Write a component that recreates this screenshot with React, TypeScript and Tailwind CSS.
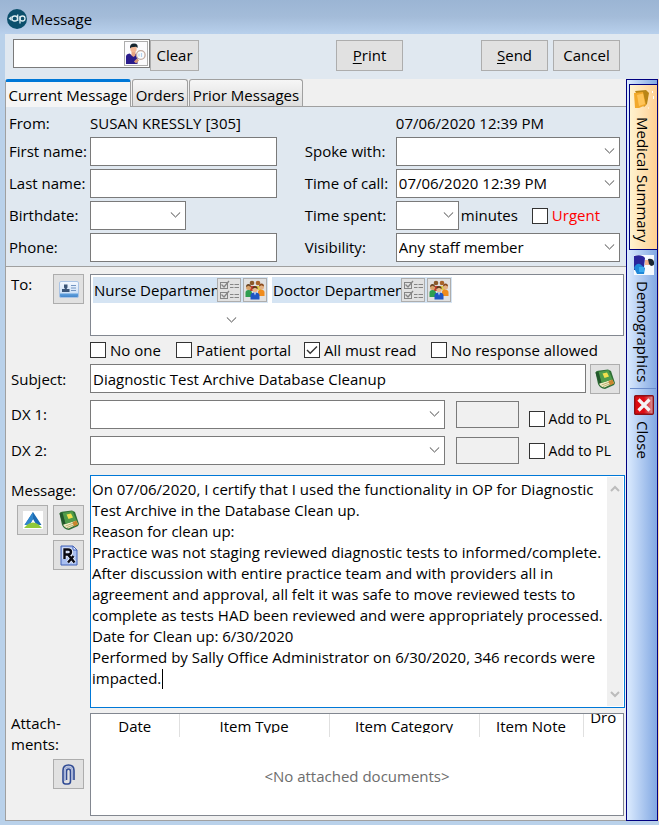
import { useState } from "react";

const messageText = `On 07/06/2020, I certify that I used the functionality in OP for Diagnostic Test Archive in the Database Clean up.
Reason for clean up:
Practice was not staging reviewed diagnostic tests to informed/complete. After discussion with entire practice team and with providers all in agreement and approval, all felt it was safe to move reviewed tests to complete as tests HAD been reviewed and were appropriately processed.
Date for Clean up: 6/30/2020
Performed by Sally Office Administrator on 6/30/2020, 346 records were impacted.`;

/* Icons */

function Chevron({ className = "" }: { className?: string }) {
  return (
    <svg viewBox="0 0 11 6" className={`h-[6px] w-[11px] ${className}`} fill="none" stroke="#4a4a4a" strokeWidth="1">
      <path d="M.8.4 5.500 5 10.200.4" />
    </svg>
  );
}

function LogoIcon() {
  return (
    <svg viewBox="0 0 20 20" className="size-5">
      <circle cx="10" cy="10" r="10" fill="#0b4f6c" />
      <path d="M1.500 9.500 4.500 7v5z" fill="#cfe3ea" />
      <rect x="5" y="7" width="5.500" height="5" rx="2.500" fill="none" stroke="#dcecf1" strokeWidth="1.300" />
      <path d="M10.700 5.500V12" stroke="#dcecf1" strokeWidth="1.300" />
      <rect x="13" y="7" width="5" height="5" rx="2.500" fill="none" stroke="#dcecf1" strokeWidth="1.300" />
      <path d="M13 7v7.500" stroke="#dcecf1" strokeWidth="1.300" />
    </svg>
  );
}

function PatientSearchIcon() {
  return (
    <svg viewBox="0 0 20 22" className="h-[22px] w-5">
      <path d="M0 21v-7.500Q0 11 3.500 10.500L7 13l3-2.500 1.500 2V21z" fill="#2a1c8c" />
      <path d="M5.500 8.500h4v4L7.500 14l-2-1.500z" fill="#e9a583" />
      <circle cx="7.500" cy="6" r="3.200" fill="#f5b795" />
      <path d="M4 5.500Q3.500.5 8 .5T11.500 5L10 3.800 5.500 4.300z" fill="#17262f" />
      <path d="m12 16.500-3 3" stroke="#d99a76" strokeWidth="3" />
      <circle cx="14.800" cy="12" r="4.300" fill="#fbfdff" stroke="#c3aaa0" strokeWidth="1.300" />
      <path d="M13 10.500v3M15.500 10v4" fill="none" stroke="#b8d2ee" strokeWidth="1.200" />
    </svg>
  );
}

function CardIcon() {
  return (
    <svg viewBox="0 0 20 17" className="h-[17px] w-5">
      <defs>
        <linearGradient id="cardFill" x2="0" y2="1">
          <stop offset="0" stopColor="#f4f9ff" />
          <stop offset=".7" stopColor="#cfe2f8" />
          <stop offset=".8" stopColor="#5d9ddb" />
          <stop offset="1" stopColor="#3f83c9" />
        </linearGradient>
      </defs>
      <rect x=".5" y=".5" width="19" height="16" rx="1.500" fill="url(#cardFill)" stroke="#a9c3e4" />
      <path d="M5 3.500h3.500v3L7.500 8h3v3H3V8h3L5 6.500z" fill="#3c5678" />
      <path d="M12 4.500h5M12 7h5M12 9.500h5" stroke="#7496c2" strokeWidth="1.200" />
    </svg>
  );
}

function ChecklistIcon() {
  return (
    <svg viewBox="0 0 20 20" className="size-5" fill="none" stroke="#858585">
      <rect x="1.500" y="2.500" width="7" height="6" />
      <rect x="1.500" y="12.500" width="7" height="6" />
      <path d="m2.500 4.500 2.500 2.500L10 1M2.500 14.500 5 17l5-6" strokeWidth="1.300" />
      <path d="M11 4.500h3.500M15.500 4.500H20M11 7.500h3.500M15.500 7.500H20M11 14.500h3.500M15.500 14.500H20M11 17.500h3.500M15.500 17.500H20" />
    </svg>
  );
}

function GroupIcon() {
  return (
    <svg viewBox="0 0 20 20" className="size-5">
      <circle cx="7" cy="3" r="2.300" fill="#8a5a2b" />
      <circle cx="13" cy="3" r="2.300" fill="#a8642a" />
      <path d="M4.500 6h5v5h-5z" fill="#c23b2e" />
      <path d="M11 6h5v4h-5z" fill="#d9cf4a" />
      <circle cx="3.500" cy="7.500" r="2.500" fill="#d8a26a" />
      <path d="M1 7q0-3 2.500-3T6 7L3.500 5.800z" fill="#6b4423" />
      <path d="M.5 17v-4.500Q.5 10 3.500 10T7 12.500V17z" fill="#2f9e4f" />
      <circle cx="16.500" cy="7" r="2.500" fill="#e3b183" />
      <path d="M14 6.500q0-3 2.500-3T19 6.500l-2.500-1.200z" fill="#8a4b1d" />
      <path d="M13 16v-4q0-2.500 3-2.500t3.500 2.500v4z" fill="#f08c1d" />
      <circle cx="10" cy="9.500" r="2.600" fill="#eab88c" />
      <path d="M7.300 9q0-3 2.700-3t2.700 3L10 7.800z" fill="#5a3517" />
      <path d="M5.500 19.500v-4q0-3 4.500-3t4.500 3v4z" fill="#1f56c4" />
      <path d="m9 12.500 1 3 1-3z" fill="#dfeafb" />
    </svg>
  );
}

function BookIcon() {
  return (
    <svg viewBox="0 0 22 22" className="size-[22px]">
      <path d="M1.500 4.500Q2 3 4 2.800L14 1.500l3 1.500 4 12-1 2-9 4q-5-.5-7-5z" fill="#2f6f36" />
      <path d="M5 15.500 18 11.500l2 3.500-9.500 4.500Q6.500 19 5 15.500z" fill="#f3ecc8" />
      <path d="m7.500 17 11-4M9 18.500l10.500-4" stroke="#a8a25a" strokeWidth=".8" />
      <path d="M4.500 4 14.500 2l4 9.500L7.500 15z" fill="#4f9c4a" />
      <path d="M1.500 4.500 4.500 4l3 11-2.500.5z" fill="#23572c" />
      <path d="m8.500 5.500 4.500-1 2 4-4.500 1.500z" fill="#f2e04e" />
      <path d="m14.500 13 4-1.500 1.500 4-4 2z" fill="#c9862f" />
    </svg>
  );
}

function TriangleIcon() {
  return (
    <svg viewBox="0 0 20 18" className="h-[18px] w-5">
      <path fill="#fff" d="M0 0h20v18H0z" />
      <path d="M10 1 18.500 14h-5L10 8l-3.500 6h-5z" fill="#1c6cb4" />
      <path d="M10 1v7l-3.500 6h-5z" fill="#2f86cc" />
      <path d="M4.500 13.500Q10 9.500 15.500 13.500l3.500 3.500H1z" fill="#8fc93a" />
    </svg>
  );
}

function RxIcon() {
  return (
    <svg viewBox="0 0 18 21" className="h-[21px] w-[18px]">
      <path d="M1 1h12l4 4v15H1z" fill="#a9bff0" stroke="#4262b8" />
      <path d="M13 1v4h4z" fill="#eef3ff" stroke="#4262b8" />
      <path d="M4.500 14V4.500h3.500q3 0 3 2.500t-3 2.500H4.500m3.500 0 6.500 8M13.500 11 8 17.500" fill="none" stroke="#eef3ff" strokeWidth="4.200" />
      <path d="M4.500 14V4.500h3.500q3 0 3 2.500t-3 2.500H4.500m3.500 0 6.500 8M13.500 11 8 17.500" fill="none" stroke="#0a0a14" strokeWidth="2.400" />
    </svg>
  );
}

function PaperclipIcon() {
  return (
    <svg viewBox="0 0 13 21" className="h-[21px] w-[13px]" fill="none">
      <path d="M12 16V6.500Q12 1 6.500 1T1 6.500V17q0 3 2.500 3h2.500q2.500 0 2.500-3V7.500Q8.500 5 6.500 5t-2 2.500V16" stroke="#2f4a94" strokeWidth="1.600" />
      <path d="M10.200 16V7q0-4-3.700-4T2.800 7v10" stroke="#a3b1da" strokeWidth="1.500" />
    </svg>
  );
}

function FolderIcon() {
  return (
    <svg viewBox="0 0 20 20" className="size-5">
      <path d="M1 2 12 1l3 3-2 11-3 3z" fill="#b98516" />
      <path d="M0 4 9 3l3 13-7 3H1z" fill="#f2a92c" />
      <path d="m3 6 6-1.500L11 15l-6 2z" fill="#ffc458" />
      <path d="M18.500 2v2M19.500 7v3M14 19h1" stroke="#fff" />
    </svg>
  );
}

function PersonIcon() {
  return (
    <svg viewBox="0 0 20 20" className="size-5">
      <path fill="#f7fbff" d="M0 0h20v20H0z" />
      <path d="M0 1q8-2 11 2l-1 9-4 3H0z" fill="#2a249b" />
      <path d="M11 5h5v5h-5z" fill="#f4b592" />
      <path d="M14 4q5-1 6 3t-3 4l-2-2z" fill="#1b2631" />
      <path d="M0 13q2-5 6-4l5 4-1 6H3z" fill="#1e87d8" />
      <path d="M5 12h5v5H5z" fill="#38a9ee" />
    </svg>
  );
}

function CloseIcon() {
  return (
    <svg viewBox="0 0 20 20" className="size-5">
      <defs>
        <linearGradient id="closeFill">
          <stop offset=".5" stopColor="#dd0b12" />
          <stop offset="1" stopColor="#d79a9e" />
        </linearGradient>
      </defs>
      <rect x=".7" y=".7" width="18.600" height="18.600" rx="1" fill="url(#closeFill)" stroke="#8c1016" strokeWidth="1.400" />
      <path d="m4.500 4.500 11 11M15.500 4.500l-11 11" stroke="#f4f4f4" strokeWidth="3.200" />
    </svg>
  );
}

/* Controls */

interface ComboProps {
  id: string;
  value?: string;
  className?: string;
}

function Combo({ id, value = "", className = "" }: ComboProps) {
  return (
    <div className={`relative ${className}`}>
      <select
        id={id}
        defaultValue={value}
        className="block h-[29px] w-full appearance-none border border-[#7a7a7a] bg-white pl-[2px] pr-6 outline-none"
      >
        <option value={value}>{value}</option>
      </select>
      <Chevron className="pointer-events-none absolute right-[5px] top-[11px]" />
    </div>
  );
}

interface CheckProps {
  label: string;
  checked?: boolean;
  className?: string;
}

function Check({ label, checked = false, className = "" }: CheckProps) {
  const [on, setOn] = useState(checked);

  return (
    <label className={`flex items-center gap-1 whitespace-nowrap ${className}`}>
      <span className="relative block size-4 shrink-0">
        <input
          type="checkbox"
          checked={on}
          onChange={(e) => setOn(e.target.checked)}
          className="block size-4 appearance-none border border-[#333] bg-white"
        />
        {on && (
          <svg viewBox="0 0 16 16" className="pointer-events-none absolute inset-0" fill="none" stroke="#333" strokeWidth="1.4">
            <path d="m3 8 3.200 3.300L13 4.500" />
          </svg>
        )}
      </span>
      {label}
    </label>
  );
}

interface IconButtonProps {
  label: string;
  className?: string;
  children: React.ReactNode;
}

function IconButton({ label, className = "h-[30px] w-[31px] bg-[#e1e1e1]", children }: IconButtonProps) {
  return (
    <button
      type="button"
      aria-label={label}
      className={`flex shrink-0 items-center justify-center border border-[#adadad] ${className}`}
    >
      {children}
    </button>
  );
}

function Chip({ name, className }: { name: string; className: string }) {
  return (
    <div className={`flex h-[26px] items-center bg-[#d5e4f3] pr-px ${className}`}>
      <span className="min-w-0 flex-1 overflow-hidden whitespace-nowrap pl-px">{name}</span>
      <IconButton label="Tasks" className="size-6 bg-[#e1e1e1]">
        <ChecklistIcon />
      </IconButton>
      <IconButton label="Members" className="ml-[2px] size-6 bg-[#e1e1e1]">
        <GroupIcon />
      </IconButton>
    </div>
  );
}

const textBox = "block h-[29px] w-full min-w-0 border border-[#7a7a7a] bg-white px-[2px] outline-none";
const pushButton = "h-[31px] border border-[#adadad] bg-[#e1e1e1]";
const lowerRow = "grid grid-cols-[79px_1fr]";

export default function App() {
  const [subject, setSubject] = useState("Diagnostic Test Archive Database Cleanup");
  const [message, setMessage] = useState(messageText);

  return (
    <div className="bg-[#b9d1ea] font-['Open_Sans','Noto_Sans',sans-serif] text-[15px] leading-[21px] text-black">
      {/* Title bar */}
      <header className="flex h-[34px] items-center gap-1 bg-linear-to-b from-[#9bb5d4] via-[#a4bcd9] to-[#b8d0ec] pl-[7px] pt-1">
        <LogoIcon />
        <h1>Message</h1>
      </header>

      <div className="pb-1 pl-[5px]">
        {/* Toolbar */}
        <div className="flex h-[45px] bg-[#e0e8f0] pl-2 pr-[39px] pt-[5px]">
          <div className="flex h-[29px] w-[137px] items-center border border-[#7a7a7a] bg-white pr-px">
            <input type="text" aria-label="Patient search" className="h-full min-w-0 flex-1 px-1 outline-none" />
            <IconButton label="Find patient" className="h-[25px] w-6 bg-[#fbfbfd]">
              <PatientSearchIcon />
            </IconButton>
          </div>
          <button type="button" className={`mt-px w-[49px] ${pushButton}`}>
            Clear
          </button>
          <div className="flex-[137]" />
          <button type="button" className={`mt-px w-[67px] ${pushButton}`}>
            <span className="underline underline-offset-2">P</span>rint
          </button>
          <div className="flex-[78]" />
          <button type="button" className={`mt-px w-[67px] ${pushButton}`}>
            <span className="underline underline-offset-2">S</span>end
          </button>
          <button type="button" className={`ml-[5px] mt-px w-[67px] ${pushButton}`}>
            Cancel
          </button>
        </div>

        <div className="flex bg-[#f0f0f0]">
          <main className="min-w-0 flex-1">
            {/* Tabs */}
            <div role="tablist" className="flex h-7 items-stretch bg-[#f0f0f0]">
              <button
                type="button"
                role="tab"
                aria-selected="true"
                className="w-[126px] whitespace-nowrap rounded-t-[3px] border-x border-t-[3px] border-x-[#a0a0a0] border-t-[#0078d7] bg-[#f5f5f5] pt-[2px]"
              >
                Current Message
              </button>
              <div className="flex flex-1 gap-px border-b border-[#a0a0a0] pl-px">
                <button
                  type="button"
                  role="tab"
                  className="w-14 whitespace-nowrap rounded-t-[3px] border border-b-0 border-[#a0a0a0] bg-linear-to-b from-[#f6f6f6] to-[#dedede] pt-[5px]"
                >
                  Orders
                </button>
                <button
                  type="button"
                  role="tab"
                  className="w-[114px] whitespace-nowrap rounded-t-[3px] border border-b-0 border-[#a0a0a0] bg-linear-to-b from-[#f6f6f6] to-[#dedede] pt-[5px]"
                >
                  Prior Messages
                </button>
              </div>
            </div>

            {/* Caller details */}
            <section className="grid grid-cols-[81px_5fr_28px_91px_6fr] items-center gap-y-[3px] border-l border-[#a0a0a0] bg-[#e0e8f0] pb-1 pl-[3px] pr-[6px] pt-[6px]">
              <span className="whitespace-nowrap">From:</span>
              <span className="col-span-3 whitespace-nowrap">SUSAN KRESSLY [305]</span>
              <span className="whitespace-nowrap">07/06/2020 12:39 PM</span>

              <label htmlFor="firstName" className="whitespace-nowrap">First name:</label>
              <input id="firstName" type="text" className={textBox} />
              <span />
              <label htmlFor="spokeWith" className="whitespace-nowrap">Spoke with:</label>
              <Combo id="spokeWith" />

              <label htmlFor="lastName" className="whitespace-nowrap">Last name:</label>
              <input id="lastName" type="text" className={textBox} />
              <span />
              <label htmlFor="timeOfCall" className="whitespace-nowrap">Time of call:</label>
              <Combo id="timeOfCall" value="07/06/2020 12:39 PM" />

              <label htmlFor="birthdate" className="whitespace-nowrap">Birthdate:</label>
              <Combo id="birthdate" className="w-24" />
              <span />
              <label htmlFor="timeSpent" className="whitespace-nowrap">Time spent:</label>
              <div className="flex items-center">
                <Combo id="timeSpent" className="w-[63px]" />
                <span className="ml-[2px]">minutes</span>
                <Check label="Urgent" className="ml-auto mr-5 text-[#ff0000]" />
              </div>

              <label htmlFor="phone" className="whitespace-nowrap">Phone:</label>
              <input id="phone" type="text" className={textBox} />
              <span />
              <label htmlFor="visibility" className="whitespace-nowrap">Visibility:</label>
              <Combo id="visibility" value="Any staff member" />
            </section>

            {/* Message details */}
            <section className="border border-r-0 border-[#a0a0a0] bg-[#f0f0f0] pb-1 pl-[5px] pr-px pt-[7px]">
              <div className={lowerRow}>
                <div className="flex items-start justify-between pr-[6px]">
                  <span>To:</span>
                  <IconButton label="Choose recipients">
                    <CardIcon />
                  </IconButton>
                </div>
                <div className="mr-px flex h-[62px] flex-col justify-between border border-[#828790] bg-white px-[2px] pb-3 pt-[2px]">
                  <div className="flex gap-1">
                    <Chip name="Nurse Departmen" className="w-[175px]" />
                    <Chip name="Doctor Departmen" className="w-[180px]" />
                  </div>
                  <button type="button" aria-label="More recipients" className="ml-[133px] w-3">
                    <Chevron />
                  </button>
                </div>
              </div>

              <div className="ml-[79px] flex h-7 items-center">
                <Check label="No one" className="w-[86px]" />
                <Check label="Patient portal" className="w-32" />
                <Check label="All must read" checked className="w-[127px]" />
                <Check label="No response allowed" />
              </div>

              <div className={lowerRow}>
                <label htmlFor="subject" className="self-center">Subject:</label>
                <div className="flex gap-1 pr-[5px]">
                  <input
                    id="subject"
                    type="text"
                    value={subject}
                    onChange={(e) => setSubject(e.target.value)}
                    className={textBox}
                  />
                  <IconButton label="Subject phrases" className="size-[30px] bg-[#e1e1e1]">
                    <BookIcon />
                  </IconButton>
                </div>
              </div>

              <div className="mt-[6px] flex flex-col gap-[7px]">
                <div className={lowerRow}>
                  <label htmlFor="dx1" className="self-center">DX 1:</label>
                  <div className="flex items-center pr-[14px]">
                    <Combo id="dx1" className="min-w-0 flex-1" />
                    <input type="text" disabled aria-label="DX 1 code" className="ml-[11px] h-[27px] w-[63px] border border-[#7a7a7a]" />
                    <Check label="Add to PL" className="ml-[10px] mt-2 text-sm" />
                  </div>
                </div>
                <div className={lowerRow}>
                  <label htmlFor="dx2" className="self-center">DX 2:</label>
                  <div className="flex items-center pr-[14px]">
                    <Combo id="dx2" className="min-w-0 flex-1" />
                    <input type="text" disabled aria-label="DX 2 code" className="ml-[11px] h-[27px] w-[63px] border border-[#7a7a7a]" />
                    <Check label="Add to PL" className="ml-[10px] text-sm" />
                  </div>
                </div>
              </div>

              <div className={`mt-[10px] ${lowerRow}`}>
                <div className="pr-[6px] pt-[5px]">
                  <label htmlFor="message">Message:</label>
                  <div className="mt-1 flex justify-end gap-[5px]">
                    <IconButton label="Patient education">
                      <TriangleIcon />
                    </IconButton>
                    <IconButton label="Message phrases">
                      <BookIcon />
                    </IconButton>
                  </div>
                  <div className="mt-[5px] flex justify-end">
                    <IconButton label="Prescriptions">
                      <RxIcon />
                    </IconButton>
                  </div>
                </div>
                <div className="relative flex border border-[#0078d7] bg-white pr-px">
                  <textarea
                    id="message"
                    value={message}
                    onChange={(e) => setMessage(e.target.value)}
                    className="block h-[231px] min-w-0 flex-1 resize-none overflow-hidden pl-px pt-[3px] outline-none"
                  />
                  {/* text cursor */}
                  <span className="absolute left-[71px] top-[193px] h-5 w-px bg-black" />
                  <div className="my-px flex w-4 flex-col items-center justify-between bg-[#f0f0f0] py-2">
                    <button type="button" aria-label="Scroll up">
                      <svg viewBox="0 0 10 7" className="h-[7px] w-[10px]" fill="none" stroke="#bcbcbc" strokeWidth="2">
                        <path d="m1 6 4-4 4 4" />
                      </svg>
                    </button>
                    <button type="button" aria-label="Scroll down">
                      <svg viewBox="0 0 10 7" className="h-[7px] w-[10px]" fill="none" stroke="#bcbcbc" strokeWidth="2">
                        <path d="m1 1 4 4 4-4" />
                      </svg>
                    </button>
                  </div>
                </div>
              </div>

              <div className={`mt-[5px] ${lowerRow}`}>
                <div className="pr-[6px]">
                  <p>
                    Attach-
                    <br />
                    ments:
                  </p>
                  <div className="mt-1 flex justify-end">
                    <IconButton label="Attach document">
                      <PaperclipIcon />
                    </IconButton>
                  </div>
                </div>
                <div className="mr-px h-[103px] border border-[#828790] bg-white">
                  <table className="w-full table-fixed border-collapse">
                    <colgroup>
                      <col className="w-[88px]" />
                      <col />
                      <col />
                      <col className="w-[104px]" />
                      <col className="w-10" />
                    </colgroup>
                    <thead>
                      <tr className="h-[23px] align-top">
                        {["Date", "Item Type", "Item Category", "Item Note"].map((name) => (
                          <th key={name} className="border-r border-[#e0e0e0] p-0 font-normal">
                            <div className="h-[19px] overflow-hidden whitespace-nowrap pt-[2px]">{name}</div>
                          </th>
                        ))}
                        <th className="p-0 font-normal">
                          <div className="flex h-[14px] items-end overflow-hidden">
                            <span className="w-full">Dro</span>
                          </div>
                        </th>
                      </tr>
                    </thead>
                    <tbody>
                      <tr>
                        <td colSpan={5} className="h-[78px] p-0 text-center text-[#6d6d6d]">
                          &lt;No attached documents&gt;
                        </td>
                      </tr>
                    </tbody>
                  </table>
                </div>
              </div>
            </section>
          </main>

          {/* Side tabs */}
          <nav className="flex w-8 shrink-0 flex-col border border-[#000080] bg-linear-to-r from-[#dcebfe] to-[#82a8e2] pl-[2px] pt-1 leading-[18px]">
            <button
              type="button"
              className="flex h-[166px] flex-col items-start gap-2 border border-r-0 border-[#000080] bg-linear-to-r from-[#fff3d0] to-[#ffcf92] pl-1 pt-1"
            >
              <FolderIcon />
              <span className="whitespace-nowrap [writing-mode:vertical-rl]">Medical Summary</span>
            </button>
            <button type="button" className="flex h-[138px] flex-col items-start gap-[6px] pl-[5px] pt-[5px]">
              <PersonIcon />
              <span className="whitespace-nowrap [writing-mode:vertical-rl]">Demographics</span>
            </button>
            <div className="mx-px border-t border-[#6a8ccb]" />
            <button type="button" className="flex flex-col items-start gap-[6px] pl-[5px] pt-[6px]">
              <CloseIcon />
              <span className="whitespace-nowrap [writing-mode:vertical-rl]">Close</span>
            </button>
          </nav>
          <div className="w-px bg-[#ffd9a8]" />
        </div>
      </div>
    </div>
  );
}
